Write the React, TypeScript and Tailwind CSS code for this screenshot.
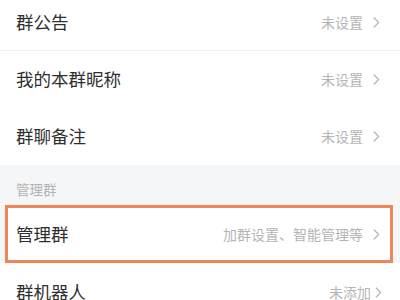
import React from "react";

const Chevron = () => (
  <svg width="7" height="11" viewBox="0 0 7 11" fill="none" className="shrink-0">
    <polyline points="1.2,1 5.6,5.5 1.2,10" stroke="#b9b9b9" strokeWidth="1.4" strokeLinecap="round" strokeLinejoin="round" />
  </svg>
);

export default function App() {
  const font = { fontFamily: '"Noto Sans CJK SC", "Noto Sans", sans-serif' };
  return (
    <div className="w-[400px] h-[300px] overflow-hidden bg-white" style={font}>
      <div className="flex items-center justify-between h-[50px] pb-[6px] pl-[16px] pr-[20px]">
        <span className="text-[17.5px] text-[#2f2f2f]">群公告</span>
        <div className="flex items-center gap-[10px]">
          <span className="text-[14px] text-[#b5b5b5]">未设置</span>
          <Chevron />
        </div>
      </div>
      <div className="h-px bg-[#f0f0f0]" />
      <div className="flex items-center justify-between h-[57px] pl-[16px] pr-[20px]">
        <span className="text-[17.5px] text-[#2f2f2f]">我的本群昵称</span>
        <div className="flex items-center gap-[10px]">
          <span className="text-[14px] text-[#b5b5b5]">未设置</span>
          <Chevron />
        </div>
      </div>
      <div className="flex items-center justify-between h-[57px] pl-[16px] pr-[20px]">
        <span className="text-[17.5px] text-[#2f2f2f]">群聊备注</span>
        <div className="flex items-center gap-[10px]">
          <span className="text-[14px] text-[#b5b5b5]">未设置</span>
          <Chevron />
        </div>
      </div>
      <div className="bg-[#f5f6f8] h-[40px] flex items-end pb-[6px] pl-[16px]">
        <span className="text-[13.5px] text-[#b3b3b3]">管理群</span>
      </div>
      <div className="bg-[#f5f6f8]">
        <div className="ml-[5px] mr-[7px] h-[58px] border-[3px] border-[#f08558] bg-white flex items-center justify-between pl-[8px] pr-[10px]">
          <span className="text-[17.5px] text-[#2f2f2f]">管理群</span>
          <div className="flex items-center gap-[10px]">
            <span className="text-[14px] text-[#b5b5b5]">加群设置、智能管理等</span>
            <Chevron />
          </div>
        </div>
      </div>
      <div className="flex items-center justify-between h-[58px] pl-[16px] pr-[18px]">
        <span className="text-[17.5px] text-[#2f2f2f]">群机器人</span>
        <div className="flex items-center gap-[4px]">
          <span className="text-[14px] text-[#b5b5b5]">未添加</span>
          <Chevron />
        </div>
      </div>
    </div>
  );
}
